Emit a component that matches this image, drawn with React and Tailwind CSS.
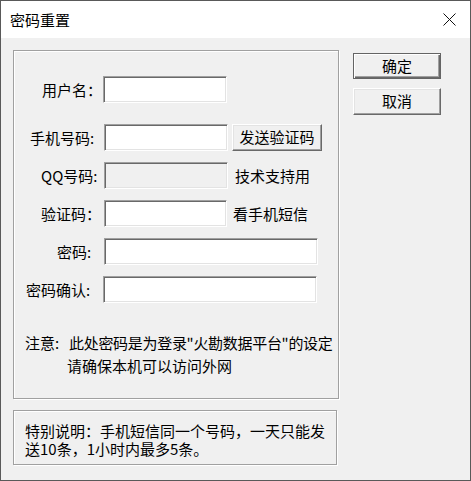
import React from 'react';

const font = "font-['Noto_Sans_CJK_SC','Noto_Sans_CJK_JP',sans-serif]";

// sunken edit box, classic win32 look
const inputCls = 'h-[27px] bg-white border-t border-l border-t-[#a0a0a0] border-l-[#a0a0a0] border-b border-r border-b-white border-r-white shadow-[inset_1px_1px_0_#696969,inset_-1px_-1px_0_#e3e3e3]';
const disabledCls = 'h-[27px] bg-[#f0f0f0] border-t border-l border-t-[#a0a0a0] border-l-[#a0a0a0] border-b border-r border-b-white border-r-white shadow-[inset_1px_1px_0_#696969,inset_-1px_-1px_0_#e3e3e3]';
const buttonCls = 'flex items-center justify-center text-black bg-[#f0f0f0] border-t border-l border-t-white border-l-white border-b border-r border-b-[#696969] border-r-[#696969] shadow-[inset_-1px_-1px_0_#a0a0a0,inset_1px_1px_0_#e3e3e3]';
const defaultBtnCls = 'flex items-center justify-center text-black bg-[#f0f0f0] border border-[#646464] shadow-[inset_1px_1px_0_#fff,inset_-1px_-1px_0_#696969,inset_-2px_-2px_0_#a0a0a0]';
const groupCls = 'border border-[#a0a0a0] shadow-[inset_1px_1px_0_#fff,1px_1px_0_#fff]';

const Row = ({ label, labelPad, labelW = 89, mt, children }) => (
    <div className="flex items-center" style={{ marginTop: mt }}>
        <div className="shrink-0 whitespace-nowrap leading-none" style={{ width: labelW, paddingLeft: labelPad }}>{label}</div>
        {children}
    </div>
);

const App = () => {
    return (
        <div className={`w-[471px] h-[481px] border border-[#595959] bg-[#f0f0f0] flex flex-col text-[15px] text-black ${font}`}>
            {/* 标题栏 */}
            <div className="h-[37px] bg-white flex items-center justify-between pl-[9px] pr-[14px] shrink-0">
                <span className="text-[15px] leading-none">密码重置</span>
                <svg width="13" height="13" viewBox="0 0 13 13">
                    <path d="M0.5 0.5 L12.5 12.5 M12.5 0.5 L0.5 12.5" stroke="#111" strokeWidth="1" fill="none" />
                </svg>
            </div>

            <div className="flex pl-[12px]">
                <div className="flex flex-col mt-[12px]">
                    {/* 主表单 */}
                    <div className={`w-[326px] h-[349px] ${groupCls}`}>
                        <Row label="用户名：" labelPad={28} labelW={89} mt={25}>
                            <div className={`${inputCls} w-[124px]`} />
                        </Row>
                        <Row label="手机号码:" labelPad={16} labelW={90} mt={21}>
                            <div className={`${inputCls} w-[124px]`} />
                            <div className={`${buttonCls} w-[90px] h-[27px] ml-[4px]`}>发送验证码</div>
                        </Row>
                        <Row label="QQ号码:" labelPad={27} labelW={90} mt={11}>
                            <div className={`${disabledCls} w-[124px]`} />
                            <span className="ml-[7px] leading-none">技术支持用</span>
                        </Row>
                        <Row label="验证码：" labelPad={27} labelW={90} mt={11}>
                            <div className={`${inputCls} w-[123px]`} />
                            <span className="ml-[6px] leading-none">看手机短信</span>
                        </Row>
                        <Row label="密码:" labelPad={43} labelW={90} mt={11}>
                            <div className={`${inputCls} w-[214px]`} />
                        </Row>
                        <Row label="密码确认:" labelPad={12} labelW={89} mt={11}>
                            <div className={`${inputCls} w-[214px]`} />
                        </Row>

                        <div className="pl-[11px] mt-[28px] leading-[23px] whitespace-nowrap">
                            <div className="flex">
                                <span className="w-[44px] shrink-0">注意:</span>
                                <span className="tracking-[-0.3px]">此处密码是为登录"火勘数据平台"的设定</span>
                            </div>
                            <div className="pl-[42px]">请确保本机可以访问外网</div>
                        </div>
                    </div>

                    {/* 特别说明 */}
                    <div className={`w-[324px] h-[55px] mt-[11px] pl-[11px] pt-[11px] leading-[18px] whitespace-nowrap ${groupCls}`}>
                        <div>特别说明：手机短信同一个号码，一天只能发</div>
                        <div>送10条，1小时内最多5条。</div>
                    </div>
                </div>

                {/* 按钮 */}
                <div className="flex flex-col ml-[14px] mt-[15px] gap-[9px]">
                    <div className={`${defaultBtnCls} w-[88px] h-[26px]`}>确定</div>
                    <div className={`${buttonCls} w-[88px] h-[27px]`}>取消</div>
                </div>
            </div>
        </div>
    );
};

export default App;
